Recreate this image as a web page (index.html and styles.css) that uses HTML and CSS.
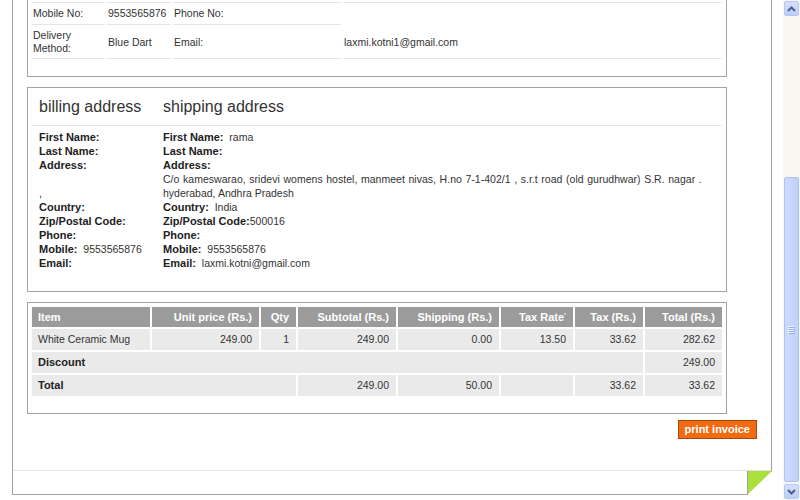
FILE: index.html
```html
<!DOCTYPE html>
<html>
<head>
<meta charset="utf-8">
<title>Invoice</title>
<link rel="stylesheet" href="styles.css">
</head>
<body>
<div class="window">
  <div class="viewport">
    <div class="frame">
      <div class="panel">
        <table class="info-table">
          <colgroup><col class="w1"><col class="w2"><col class="w3"><col class="w4"></colgroup>
          <tr class="row0"><td><div class="spacer"></div></td><td></td><td></td><td></td></tr>
          <tr><td>Mobile No:</td><td>9553565876</td><td>Phone No:</td><td class="noline"></td></tr>
          <tr class="row2"><td>Delivery Method:</td><td>Blue Dart</td><td>Email:</td><td>laxmi.kotni1@gmail.com</td></tr>
        </table>
      </div>

      <div class="panel panel-address">
        <div class="addr-grid">
          <h2>billing address</h2>
          <h2>shipping address</h2>
          <div class="addr">
            <b>First Name:</b><br>
            <b>Last Name:</b><br>
            <b>Address:</b><br>
            <br>
            ,<br>
            <b>Country:</b><br>
            <b>Zip/Postal Code:</b><br>
            <b>Phone:</b><br>
            <b>Mobile:</b>&nbsp; 9553565876<br>
            <b>Email:</b>
          </div>
          <div class="addr">
            <b>First Name:</b>&nbsp; rama<br>
            <b>Last Name:</b><br>
            <b>Address:</b><br>
            <span class="line">C/o kameswarao, sridevi womens hostel, manmeet nivas, H.no 7-1-402/1 , s.r.t road (old gurudhwar) S.R. nagar .</span><br>
            hyderabad, Andhra Pradesh<br>
            <b>Country:</b>&nbsp; India<br>
            <b>Zip/Postal Code:</b>500016<br>
            <b>Phone:</b><br>
            <b>Mobile:</b>&nbsp; 9553565876<br>
            <b>Email:</b>&nbsp; laxmi.kotni@gmail.com
          </div>
        </div>
      </div>

      <div class="panel">
        <table class="items">
          <colgroup>
            <col class="c-item"><col class="c-unit"><col class="c-qty"><col class="c-sub"><col class="c-ship"><col class="c-rate"><col class="c-tax"><col class="c-total">
          </colgroup>
          <tr>
            <th class="left">Item</th><th>Unit price (Rs.)</th><th>Qty</th><th>Subtotal (Rs.)</th><th>Shipping (Rs.)</th><th>Tax Rate<sup>'</sup></th><th>Tax (Rs.)</th><th>Total (Rs.)</th>
          </tr>
          <tr>
            <td class="left">White Ceramic Mug</td><td>249.00</td><td>1</td><td>249.00</td><td>0.00</td><td>13.50</td><td>33.62</td><td>282.62</td>
          </tr>
          <tr>
            <td class="label" colspan="7">Discount</td><td>249.00</td>
          </tr>
          <tr>
            <td class="label" colspan="3">Total</td><td>249.00</td><td>50.00</td><td></td><td>33.62</td><td>33.62</td>
          </tr>
        </table>
      </div>

      <div class="actions">
        <span class="print-btn">print invoice</span>
      </div>

      <div class="footer"></div>

      <svg class="dogear" width="25" height="25" viewBox="0 0 25 25">
        <polygon points="25,1 25,25 0,25" fill="#ffffff"/>
        <polygon points="0,1 25,1 0,25" fill="#a9e03c"/>
        <rect x="0" y="1" width="1" height="24" fill="#a0a0a0"/>
      </svg>
    </div>
  </div>

  <div class="scrollbar">
    <div class="sb-btn sb-up">
      <svg width="9" height="6" viewBox="0 0 9 6"><polyline points="1,5 4.5,1.5 8,5" fill="none" stroke="#4d6185" stroke-width="2"/></svg>
    </div>
    <div class="sb-track">
      <div class="sb-thumb">
        <svg width="8" height="8" viewBox="0 0 8 8">
          <rect x="0" y="0" width="6" height="1" fill="#eef3fe"/>
          <rect x="1" y="1" width="6" height="1" fill="#8faef0"/>
          <rect x="0" y="2" width="6" height="1" fill="#eef3fe"/>
          <rect x="1" y="3" width="6" height="1" fill="#8faef0"/>
          <rect x="0" y="4" width="6" height="1" fill="#eef3fe"/>
          <rect x="1" y="5" width="6" height="1" fill="#8faef0"/>
          <rect x="0" y="6" width="6" height="1" fill="#eef3fe"/>
          <rect x="1" y="7" width="6" height="1" fill="#8faef0"/>
        </svg>
      </div>
    </div>
    <div class="sb-btn sb-down">
      <svg width="9" height="6" viewBox="0 0 9 6"><polyline points="1,1 4.5,4.5 8,1" fill="none" stroke="#4d6185" stroke-width="2"/></svg>
    </div>
  </div>
</div>
</body>
</html>
```

FILE: styles.css
```css
html, body {
  margin: 0;
  padding: 0;
  background: #ffffff;
}

body {
  font-family: "Liberation Sans", Arial, sans-serif;
  font-size: 10.5px;
  color: #333333;
}

.window {
  display: flex;
  height: 500px;
  overflow: hidden;
}

.viewport {
  flex: none;
  width: 783px;
  height: 500px;
  overflow: hidden;
}

.frame {
  position: relative;
  box-sizing: border-box;
  width: 760px;
  margin: -34px 0 0 12px;
  border: 1px solid #a0a0a0;
  padding: 10px 14px 0;
}

.panel {
  box-sizing: border-box;
  width: 700px;
  border: 1px solid #a3a3a3;
  padding: 4px 4px 17px;
}

.panel + .panel {
  margin-top: 10px;
}

.panel-address {
  padding-bottom: 4px;
}

/* info table */
.info-table {
  table-layout: fixed;
  border-collapse: separate;
  border-spacing: 2px 0;
  width: 694px;
  margin: 0 -2px;
}

.info-table .w1 { width: 73px; }
.info-table .w2 { width: 64px; }
.info-table .w3 { width: 168px; }
.info-table .w4 { width: 379px; }

.info-table td {
  border-bottom: 1px solid #e4e4e4;
  padding: 4px 1px;
  line-height: 13px;
  vertical-align: middle;
  text-align: left;
}

.info-table .row0 td {
  padding: 0;
}

.info-table .spacer {
  height: 20px;
}

.info-table .row2 td {
  padding: 4px 1px 3px;
}

.info-table td.noline {
  border-bottom: none;
}

/* address */
.addr-grid {
  display: grid;
  grid-template-columns: 124px 1fr;
}

.addr-grid h2 {
  margin: 0;
  font-size: 16px;
  font-weight: normal;
  line-height: 19px;
  padding: 5px 7px 9px;
  border-bottom: 1px solid #e4e4e4;
  color: #333333;
}

.addr {
  padding: 4px 7px 17px;
  line-height: 14px;
}

.addr b {
  font-size: 11px;
  line-height: 13px;
  color: #222222;
}

.addr .line {
  white-space: nowrap;
  letter-spacing: 0.03px;
  word-spacing: 0.6px;
}

/* items */
.items {
  table-layout: fixed;
  border-collapse: separate;
  border-spacing: 2px;
  width: 694px;
  margin: -2px;
}

.items .c-item { width: 118px; }
.items .c-unit { width: 107px; }
.items .c-qty { width: 35px; }
.items .c-sub { width: 98px; }
.items .c-ship { width: 101px; }
.items .c-rate { width: 72px; }
.items .c-tax { width: 68px; }
.items .c-total { width: 77px; }

.items th {
  background: #9b9b9b;
  color: #ffffff;
  font-size: 11px;
  font-weight: bold;
  line-height: 14px;
  padding: 3px 7px 3px 6px;
  text-align: right;
  white-space: nowrap;
}

.items th sup {
  font-size: 8px;
  line-height: 0;
  vertical-align: 3px;
}

.items td {
  background: #eaeaea;
  line-height: 15px;
  padding: 3px 7px 3px 6px;
  text-align: right;
  white-space: nowrap;
}

.items .left {
  text-align: left;
}

.items td.label {
  text-align: left;
  font-size: 11px;
  font-weight: bold;
  color: #222222;
}

/* actions */
.actions {
  display: flex;
  justify-content: flex-end;
  margin-top: 6px;
}

.print-btn {
  display: block;
  background: #f26a12;
  border: 1px solid #a4480c;
  color: #ffffff;
  font-size: 11px;
  font-weight: bold;
  line-height: 15px;
  padding: 1px 6px;
}

.footer {
  margin: 31px -14px 0;
  height: 23px;
  border-top: 1px solid #e2e2e2;
}

.dogear {
  position: absolute;
  right: -1px;
  bottom: -1px;
  display: block;
}

/* scrollbar */
.scrollbar {
  flex: none;
  width: 17px;
  height: 500px;
  display: flex;
  flex-direction: column;
  background: #f7f6f1;
}

.sb-btn {
  box-sizing: border-box;
  flex: none;
  height: 15px;
  border: 1px solid #b6c9f4;
  border-radius: 2px;
  background: linear-gradient(#d6e1fc, #bccdf7);
  display: flex;
  align-items: center;
  justify-content: center;
}

.sb-btn svg {
  display: block;
}

.sb-up {
  margin: 1px 1px 0;
}

.sb-down {
  margin: 0 1px 1px;
}

.sb-track {
  flex: 1;
  padding: 0 1px;
}

.sb-thumb {
  box-sizing: border-box;
  margin-top: 161px;
  height: 305px;
  border: 1px solid #adc2f2;
  border-radius: 2px;
  background: linear-gradient(90deg, #cddcfd, #c0d1fb);
  display: flex;
  align-items: center;
  justify-content: center;
}

.sb-thumb svg {
  display: block;
}
```
